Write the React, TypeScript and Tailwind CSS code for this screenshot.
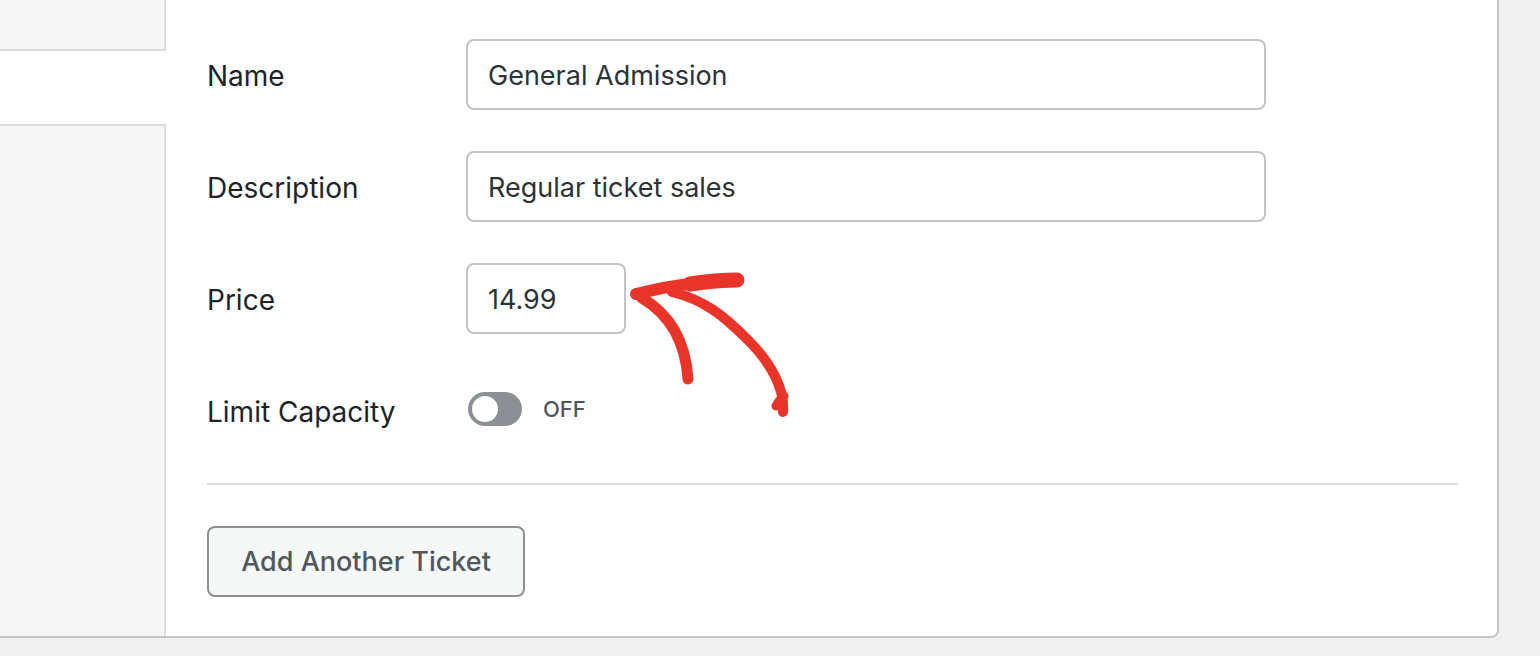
import { useState } from 'react';

const font = { fontFamily: 'Inter, "Noto Sans", sans-serif' };

function Field({ label, children }: { label: string; children: React.ReactNode }) {
  return (
    <div className="flex items-center h-[71px]">
      <div className="w-[259px] shrink-0 pt-[3px] text-[28px] text-[#1d2327]">{label}</div>
      {children}
    </div>
  );
}

function TextInput({ value, className }: { value: string; className: string }) {
  return (
    <div
      className={`h-[71px] flex items-center px-[20px] pt-[3px] border-2 border-[#c3c4c7] rounded-[8px] bg-white text-[27px] text-[#2c3338] ${className}`}
    >
      {value}
    </div>
  );
}

function Arrow() {
  return (
    <svg
      className="absolute inset-0 pointer-events-none"
      width="1540"
      height="656"
      viewBox="0 0 1540 656"
      fill="none"
    >
      <g stroke="#e9342a" strokeLinecap="round" strokeLinejoin="round">
        <path d="M783 412 C 785 390 772 364 748 340 C 724 316 705 300 672 292" strokeWidth="10" />
        <path d="M776 406 C 779 400 782 398 784 396" strokeWidth="9" />
        <path d="M688 379 C 686 350 676 318 642 298" strokeWidth="11" />
        <path d="M636 294 C 666 286 700 281 737 281" strokeWidth="12" />
        <path d="M690 284 C 710 281 725 280 737 280" strokeWidth="15" />
      </g>
    </svg>
  );
}

export default function App() {
  const [limit] = useState(false);

  return (
    <div className="relative w-[1540px] h-[656px] bg-[#f0f0f1] overflow-hidden" style={font}>
      <div className="flex w-[1499px] h-[638px] bg-white border-r-2 border-b-2 border-[#c3c4c7] rounded-br-[8px] overflow-hidden">
        <div className="w-[166px] shrink-0 flex flex-col">
          <div className="h-[51px] bg-[#f6f6f6] border-b-2 border-r-2 border-[#dcdcde]" />
          <div className="h-[73px] bg-white" />
          <div className="flex-1 bg-[#f6f6f6] border-t-2 border-r-2 border-[#dcdcde]" />
        </div>

        <div className="flex-1 pl-[41px] pr-[39px] pt-[39px] flex flex-col">
          <div className="flex flex-col gap-[41px]">
            <Field label="Name">
              <TextInput value="General Admission" className="w-[800px]" />
            </Field>
            <Field label="Description">
              <TextInput value="Regular ticket sales" className="w-[800px]" />
            </Field>
            <Field label="Price">
              <TextInput value="14.99" className="w-[160px]" />
            </Field>
            <Field label="Limit Capacity">
              <div className="flex items-center gap-[21px] pl-[2px] mb-[3px]">
                <div className={`w-[54px] h-[34px] rounded-full flex items-center px-[4px] ${limit ? 'bg-[#2271b1] justify-end' : 'bg-[#8c8f94]'}`}>
                  <div className="w-[26px] h-[26px] rounded-full bg-white" />
                </div>
                <span className="text-[22px] font-medium text-[#50575e]">{limit ? 'ON' : 'OFF'}</span>
              </div>
            </Field>
          </div>

          <div className="mt-[37px] h-[2px] bg-[#dcdcde]" />

          <div className="mt-[41px]">
            <button className="h-[71px] w-[318px] pt-[2px] border-2 border-[#8c8f94] rounded-[8px] bg-[#f6f7f7] text-[27px] font-medium text-[#50575e]">
              Add Another Ticket
            </button>
          </div>
        </div>
      </div>
      <Arrow />
    </div>
  );
}
